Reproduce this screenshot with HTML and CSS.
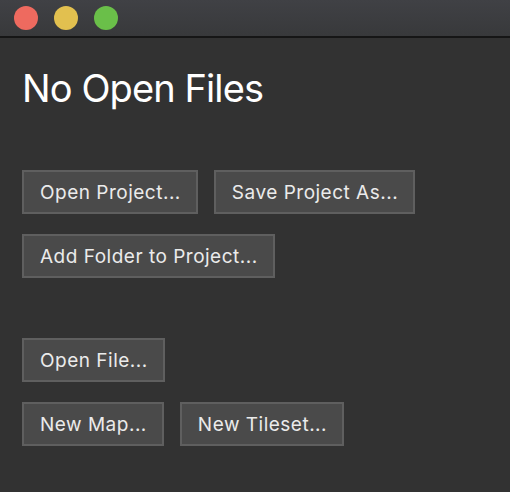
FILE: index.html
```html
<!DOCTYPE html>
<html>
<head>
<meta charset="utf-8">
<link rel="stylesheet" href="styles.css">
</head>
<body>
<div class="window">
  <div class="titlebar">
    <span class="light red"></span>
    <span class="light yellow"></span>
    <span class="light green"></span>
  </div>
  <main class="content">
    <h1 class="title">No Open Files</h1>
    <div class="group">
      <div class="row">
        <button class="btn">Open Project...</button>
        <button class="btn">Save Project As...</button>
      </div>
      <div class="row">
        <button class="btn">Add Folder to Project...</button>
      </div>
    </div>
    <div class="group second">
      <div class="row">
        <button class="btn">Open File...</button>
      </div>
      <div class="row">
        <button class="btn">New Map...</button>
        <button class="btn">New Tileset...</button>
      </div>
    </div>
  </main>
</div>
</body>
</html>
```
FILE: styles.css
```css
html, body {
  margin: 0;
  padding: 0;
  background: #323232;
  height: 100%;
  overflow: hidden;
}
.window {
  font-family: Inter, "Liberation Sans", sans-serif;
}
.titlebar {
  height: 36px;
  background: linear-gradient(#404145, #38393b);
  border-bottom: 2px solid #161616;
  display: flex;
  align-items: center;
  gap: 16px;
  padding-left: 14px;
  box-sizing: content-box;
}
.light {
  width: 24px;
  height: 24px;
  border-radius: 50%;
  display: block;
}
.red { background: #ee6a5f; }
.yellow { background: #e2c04f; }
.green { background: #6abf49; }
.content {
  padding: 0 22px;
}
.title {
  margin: 0;
  padding-top: 27px;
  font-weight: 400;
  font-size: 38px;
  line-height: 46px;
  color: #ffffff;
  letter-spacing: -0.9px;
}
.group {
  margin-top: 59px;
  display: flex;
  flex-direction: column;
  gap: 20px;
}
.group.second {
  margin-top: 60px;
}
.row {
  display: flex;
  gap: 16px;
}
.btn {
  height: 44px;
  box-sizing: border-box;
  border: 2px solid #5f5f5f;
  background: #4a4a4a;
  color: #ebebeb;
  font-family: Inter, "Liberation Sans", sans-serif;
  font-size: 19px;
  letter-spacing: 0.5px;
  padding: 0 15px 0 16px;
  margin: 0;
  border-radius: 0;
}
```
